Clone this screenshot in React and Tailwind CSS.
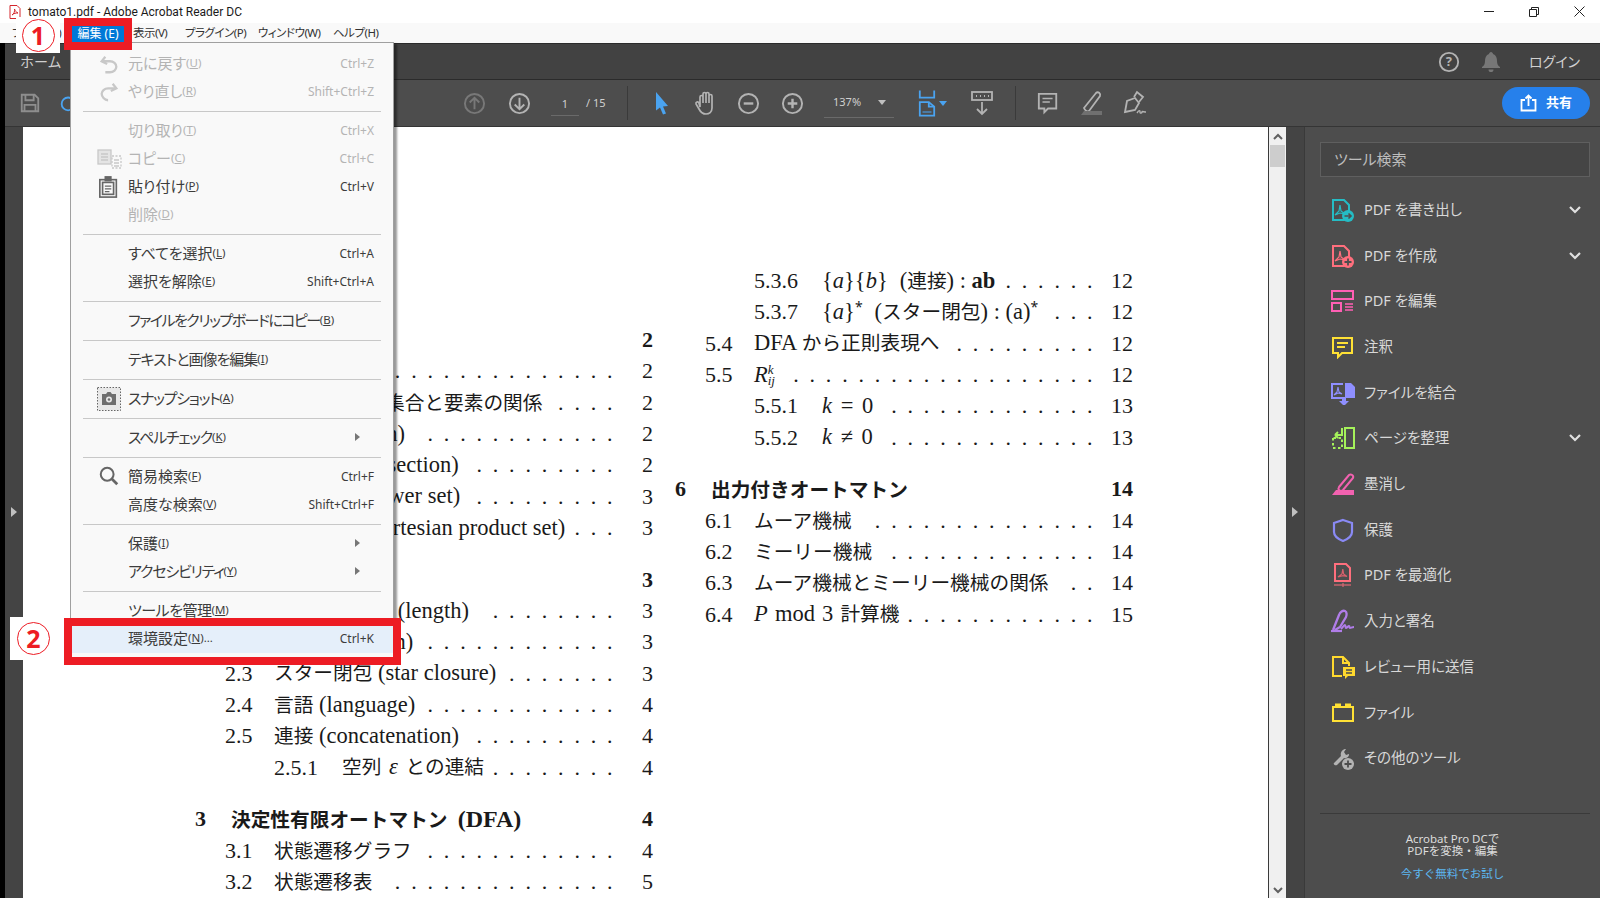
import React from 'react';

const Ico = ({ w = 24, h = 24, vb = '0 0 24 24', c = '#b3b3b3', sw = 2, children, className = '' }) => (
  <svg width={w} height={h} viewBox={vb} fill="none" stroke={c} strokeWidth={sw} className={className}>
    {children}
  </svg>
);

const toolIcons = {
  exportPdf: (
    <Ico c="#25bcc4">
      <path d="M13 22H2V2h11l5 5v7" />
      <path d="M4 17l4-4 1-6 1 6 4 3-5-1z" strokeWidth="1.200" />
      <circle cx="17" cy="18" r="6" fill="#25bcc4" stroke="none" />
      <path d="M13.500 18h6M17.500 15.500l2.500 2.500-2.500 2.500" stroke="#4d4d4d" strokeWidth="1.600" />
    </Ico>
  ),
  createPdf: (
    <Ico c="#ff6f7d">
      <path d="M13 22H2V2h11l5 5v7" />
      <path d="M4 17l4-4 1-6 1 6 4 3-5-1z" strokeWidth="1.200" />
      <circle cx="17" cy="18" r="6" fill="#ff6f7d" stroke="none" />
      <path d="M13.500 18h7M17 14.500v7" stroke="#4d4d4d" strokeWidth="1.800" />
    </Ico>
  ),
  editPdf: (
    <Ico c="#ff5fb4">
      <rect x="1" y="2" width="21" height="8" />
      <rect x="1" y="14" width="9" height="8" />
      <path d="M14 15h8M14 18h8M14 21h8" strokeWidth="1.300" />
    </Ico>
  ),
  comment: (
    <Ico c="#ffe135">
      <path d="M2 3h19v15H11l-4 4v-4H2z" />
      <path d="M6 8h11M6 12h8" />
    </Ico>
  ),
  combine: (
    <Ico c="#8f8fff">
      <path d="M11 17H1V3h11" />
      <path d="M3 14l3-3 1-5 1 5 3 2-4-1z" strokeWidth="1.100" />
      <path d="M14 2h6l4 4v11H14z" fill="#8f8fff" stroke="none" />
      <path d="M11 16h4v4h3l-5 5-5-5h3z" fill="#8f8fff" stroke="none" />
    </Ico>
  ),
  organize: (
    <Ico c="#a5f25a">
      <rect x="14" y="2" width="9" height="20" />
      <path d="M2 12v10h9v-10z" strokeDasharray="2.500 2.500" />
      <path d="M11 2v7H4M4 9l3-3M4 9l3 3" strokeWidth="2" />
    </Ico>
  ),
  redact: (
    <Ico c="#f262b0">
      <path d="M8 15L18 3c2-1.500 5 .5 4 3L12 18c-1 1-3 1-4 0-.7-1-.7-2 0-3z" />
      <path d="M1 23l4-5h18v5z" fill="#f262b0" stroke="none" />
    </Ico>
  ),
  protect: (
    <Ico c="#8a8af5" sw={2.200}>
      <path d="M12 2l9 3v9c0 4-4 7-9 9-5-2-9-5-9-9V5z" />
    </Ico>
  ),
  optimize: (
    <Ico c="#ff6f7d">
      <path d="M15 18H4V1h11l4 4v13z" />
      <path d="M7 14l4-3 .8-5 .8 5 3.400 2.500-4-.8z" strokeWidth="1.200" stroke="#d9606c" />
      <path d="M3 22h7M14 22h6" strokeWidth="1.200" />
      <circle cx="12" cy="22" r="1.200" strokeWidth="1" />
    </Ico>
  ),
  sign: (
    <Ico c="#b07de8" sw={2.300}>
      <path d="M2 21L8 6c1-3 4-5 6-4s2 3 1 6l-6 10-5 3" />
      <path d="M10 20c2-2 3-4 4-4s0 3 1 3 2-2 3-2 0 2 1 2 2-1 4-1" strokeWidth="2" />
      <path d="M0 22h11" strokeWidth="2.200" />
    </Ico>
  ),
  review: (
    <Ico c="#ffd92e">
      <path d="M11 21H2V2h10l6 6v3" />
      <path d="M12 2v6h6" />
      <path d="M12 12h12v9h-7l-3 3v-3h-2z" fill="#ffd92e" stroke="none" />
      <path d="M15 15h6M15 18h6" stroke="#4d4d4d" strokeWidth="1.300" />
    </Ico>
  ),
  file: (
    <Ico c="#ffe135">
      <rect x="2" y="7" width="20" height="14" />
      <rect x="4" y="3.500" width="6" height="3.500" fill="#ffe135" stroke="none" />
      <rect x="14" y="3.500" width="6" height="3.500" fill="#ffe135" stroke="none" />
    </Ico>
  ),
  more: (
    <Ico c="#b3b3b3">
      <path d="M3 17l7-7c-1-3 1-7 5-7l-2 3 2 3 3-1c.5 2-2 5-5 4l-7 7c-2 1-4-1-3-2z" fill="#b3b3b3" stroke="none" />
      <circle cx="17" cy="18" r="6" fill="#b3b3b3" stroke="none" />
      <path d="M13.500 18h7M17 14.500v7" stroke="#4d4d4d" strokeWidth="1.800" />
    </Ico>
  ),
};

const tools = [
  { k: 'exportPdf', label: 'PDF を書き出し', more: true },
  { k: 'createPdf', label: 'PDF を作成', more: true },
  { k: 'editPdf', label: 'PDF を編集' },
  { k: 'comment', label: '注釈' },
  { k: 'combine', label: 'ファイルを結合' },
  { k: 'organize', label: 'ページを整理', more: true },
  { k: 'redact', label: '墨消し' },
  { k: 'protect', label: '保護' },
  { k: 'optimize', label: 'PDF を最適化' },
  { k: 'sign', label: '入力と署名' },
  { k: 'review', label: 'レビュー用に送信' },
  { k: 'file', label: 'ファイル' },
  { k: 'more', label: 'その他のツール' },
];

// text of the TeX page: CJK and latin have different sizes
const T = ({ s }) =>
  s.split(/([\x00-\x7f]+)/).map((part, i) =>
    /[\x00-\x7f]/.test(part) ? (
      <span key={i} className="text-[22.500px] font-['Liberation_Serif',serif]">{part}</span>
    ) : (
      <span key={i}>{part}</span>
    )
  );

const Dots = ({ n }) => (
  <div className="flex flex-1 justify-end">
    {Array.from({ length: n }).map((_, i) => (
      <span key={i} className="w-[16.33px] text-center text-[22px] font-['Liberation_Serif',serif]">.</span>
    ))}
  </div>
);

const levelWrap = ['', 'pl-[30px]', 'pl-[79px]'];
const levelNum = ['w-[36px]', 'w-[49px]', 'w-[68px]'];

const Row = ({ level = 1, num, title, s, dots = 0, page, first, titleClass = '' }) => (
  <div className={`flex h-[31.3px] items-center whitespace-nowrap ${level === 0 ? 'font-bold' : ''} ${level === 0 && !first ? 'mt-[20.500px]' : ''} ${levelWrap[level]}`}>
    <span className={`shrink-0 text-[22px] font-['Liberation_Serif',serif] ${levelNum[level]}`}>{num}</span>
    <span className={`shrink-0 ${titleClass}`}>{title || <T s={s} />}</span>
    {dots > 0 ? <Dots n={dots} /> : <div className="flex-1" />}
    <span className="w-[35px] shrink-0 text-right text-[22px] font-['Liberation_Serif',serif]">{page}</span>
  </div>
);

const I = ({ children }) => <i className="text-[22.500px] font-['Liberation_Serif',serif]">{children}</i>;
const L = ({ children, className = '' }) => <span className={`text-[22.500px] font-['Liberation_Serif',serif] ${className}`}>{children}</span>;

const Col = ({ className, children }) => (
  <div className={`w-[458px] shrink-0 text-[19.700px] leading-none text-[#1a1a1a] ${className}`}>{children}</div>
);

const MenuItem = ({ label, m, tail, sc, off, icon, arrow, active, tight = '' }) => (
  <div className={`relative flex h-[28px] items-center pb-[2px] pl-[57px] pr-[19px] ${active ? 'bg-[#e5effa]' : ''} ${off ? 'text-[#b4b4b4]' : 'text-[#3c3c3c]'}`}>
    {icon && <span className="absolute left-[24px] top-0 flex h-[28px] w-[28px] items-center justify-center">{icon}</span>}
    <span className={`text-[15px] [font-feature-settings:'palt'] ${tight}`}>{label}</span>
    <span className="text-[11.500px]">(<span className="underline">{m}</span>){tail}</span>
    {sc && <span className="ml-auto mt-[2px] text-[12px]">{sc}</span>}
    {arrow && <span className="ml-auto mr-[14px] h-0 w-0 border-y-[4px] border-l-[5px] border-y-transparent border-l-[#777]" />}
  </div>
);

const Sep = () => (
  <div className="flex h-[11px] items-center px-[12px]">
    <div className="h-px w-full bg-[#c8c8c8]" />
  </div>
);

const EditMenu = () => (
  <div className="absolute left-[70px] top-[42px] w-[324px] border border-[#a0a0a0] bg-[#f9f9f9] py-[7px] shadow-[3px_2px_2px_rgba(0,0,0,0.4)]">
    <MenuItem off label="元に戻す" m="U" sc="Ctrl+Z" icon={<Ico w={22} h={22} c="#c8c8c8" sw={2.500}><path d="M8 4L4 9l6 3" /><path d="M5 9h8c4 0 7 3 7 6s-3 6-7 6H8" /></Ico>} />
    <MenuItem off label="やり直し" m="R" sc="Shift+Ctrl+Z" icon={<Ico w={22} h={22} c="#c8c8c8" sw={2.500}><path d="M16 3l4 5-6 3" /><path d="M19 8h-8c-4 0-7 3-7 6s3 7 7 7" /></Ico>} />
    <Sep />
    <MenuItem off label="切り取り" m="T" sc="Ctrl+X" />
    <MenuItem off label="コピー" m="C" sc="Ctrl+C" icon={<Ico c="#c8c8c8" sw={1.300} w={26} h={24}><rect x="1" y="3" width="13" height="14" fill="#e4e4e4" /><path d="M4 7h7M4 10h7M4 13h7" /><rect x="15" y="9" width="9" height="12" strokeDasharray="2 1.500" /><path d="M17 13h5M17 16h5M17 19h5" /></Ico>} />
    <MenuItem label="貼り付け" m="P" sc="Ctrl+V" icon={<Ico c="#666" sw={1.800} w={22} h={24}><rect x="2" y="4" width="18" height="19" /><rect x="8" y="1" width="6" height="4" fill="#666" /><rect x="5" y="7" width="12" height="13" /><path d="M7.500 11h7M7.500 14h7M7.500 17h5" strokeWidth="1.300" /></Ico>} />
    <MenuItem off label="削除" m="D" />
    <Sep />
    <MenuItem label="すべてを選択" m="L" sc="Ctrl+A" />
    <MenuItem label="選択を解除" m="E" sc="Shift+Ctrl+A" />
    <Sep />
    <MenuItem label="ファイルをクリップボードにコピー" m="B" tight="tracking-[-1.500px]" />
    <Sep />
    <MenuItem label="テキストと画像を編集" m="I" tight="tracking-[-1px]" />
    <Sep />
    <MenuItem label="スナップショット" m="A" tight="tracking-[-1.300px]" icon={<svg width="24" height="24" viewBox="0 0 24 24"><rect x="0.500" y="0.500" width="23" height="23" fill="#e8e8e8" stroke="#666" strokeDasharray="1.500 1.500" /><path d="M5 7h4l1.500-2h3L15 7h4v11H5z" fill="#6e6e6e" /><circle cx="12" cy="12.500" r="3" fill="#e8e8e8" /><circle cx="12" cy="12.500" r="1.300" fill="#6e6e6e" /></svg>} />
    <Sep />
    <MenuItem label="スペルチェック" m="K" arrow tight="tracking-[-1.300px]" />
    <Sep />
    <MenuItem label="簡易検索" m="F" sc="Ctrl+F" icon={<Ico c="#666" sw={2.200} w={22} h={22}><circle cx="10" cy="9" r="7" /><path d="M15 14l6 6" strokeWidth="3" /></Ico>} />
    <MenuItem label="高度な検索" m="V" sc="Shift+Ctrl+F" />
    <Sep />
    <MenuItem label="保護" m="I" arrow />
    <MenuItem label="アクセシビリティ" m="Y" arrow tight="tracking-[-1.200px]" />
    <Sep />
    <MenuItem label="ツールを管理" m="M" tight="tracking-[-0.500px]" />
    <MenuItem active label="環境設定" m="N" tail="..." sc="Ctrl+K" />
  </div>
);

const Badge = ({ n, className }) => (
  <div className={`absolute flex items-center bg-white ${className}`}>
    <div className="flex h-[33px] w-[33px] items-center justify-center rounded-full border-[1.500px] border-[#ed1c24] text-[25px] font-bold leading-none text-[#ed1c24]">
      {n}
    </div>
  </div>
);

const TB = ({ w = 'w-[44px]', className = '', children }) => (
  <div className={`flex h-[34px] shrink-0 items-center justify-center ${w} ${className}`}>{children}</div>
);

const Toolbar = () => (
  <div className="flex h-[47px] shrink-0 items-center border-b border-[#353535] bg-[#4d4d4d] text-[#d0d0d0]">
    <TB w="w-[30px]" className="ml-[10px]">
      <Ico w={22} h={22} c="#8e8e8e"><path d="M3 3h14l4 4v14H3z" /><path d="M7 3v6h9V3M6 21v-7h12v7" /></Ico>
    </TB>
    <TB w="w-[30px]" className="ml-[9px]">
      <Ico w={22} h={22} c="#4aa3f0"><circle cx="11" cy="13" r="7" /></Ico>
    </TB>
    <TB className="ml-[368px]">
      <Ico c="#787878" w={23} h={23}><circle cx="12" cy="12" r="10" /><path d="M12 18V6M7 11l5-5 5 5" /></Ico>
    </TB>
    <TB className="ml-[1px]">
      <Ico w={23} h={23}><circle cx="12" cy="12" r="10" /><path d="M12 6v12M7 13l5 5 5-5" /></Ico>
    </TB>
    <div className="ml-[10px] w-[28px] border-b border-[#6a6a6a] pb-[4px] pt-[6px] text-center text-[11px] leading-[14px]">1</div>
    <div className="ml-[7px] w-[21px] whitespace-nowrap text-[11px]">/ 15</div>
    <div className="ml-[20px] h-[34px] w-px bg-[#3a3a3a]" />
    <TB className="ml-[12px]">
      <svg width="18" height="24" viewBox="0 0 18 24"><path d="M3 1l12 14-5 .5 3 7-3 1-3-7-4 3z" fill="#4aa3f0" /></svg>
    </TB>
    <TB>
      <Ico w={24} h={26} vb="0 0 24 26" sw={1.700}><path d="M6 17V7a1.500 1.500 0 013 0v6V4a1.500 1.500 0 013 0v9V4a1.500 1.500 0 013 0v9V6a1.500 1.500 0 013 0v12c0 4-3 6-6 6s-5-1-7-5l-3-5c-.5-2 2-3 3-1z" /></Ico>
    </TB>
    <TB className="ml-[-2px]">
      <Ico w={23} h={23}><circle cx="12" cy="12" r="10" /><path d="M7 12h10" strokeWidth="2.500" /></Ico>
    </TB>
    <TB>
      <Ico w={23} h={23}><circle cx="12" cy="12" r="10" /><path d="M7 12h10M12 7v10" strokeWidth="2.500" /></Ico>
    </TB>
    <div className="ml-[10px] flex h-[30px] w-[70px] items-center border-b border-[#6a6a6a] pl-[9px] pr-[8px] text-[11px]">
      137%
      <span className="ml-auto h-0 w-0 border-x-[4px] border-t-[5px] border-x-transparent border-t-[#c0c0c0]" />
    </div>
    <TB w="w-[22px]" className="ml-[22px]">
      <Ico w={18} h={30} vb="0 0 20 30" c="#4aa3f0" sw={2}><path d="M2 1v8h16V1M2 29V14h10l6 5v10z" /><path d="M12 14v5h6" /><path d="M5 25h10" strokeWidth="1.200" /></Ico>
    </TB>
    <span className="ml-[1px] h-0 w-0 border-x-[4px] border-t-[5px] border-x-transparent border-t-[#4aa3f0]" />
    <TB className="ml-[13px]">
      <Ico w={24} h={28} vb="0 0 24 28" sw={1.800}><rect x="2" y="3" width="20" height="8" /><path d="M6 7h1M10 7h1M14 7h1M18 7h1" /><path d="M12 13v12M7 20l5 5 5-5" /></Ico>
    </TB>
    <div className="ml-[11px] h-[34px] w-px bg-[#3a3a3a]" />
    <TB className="ml-[10px]">
      <Ico w={22} h={24}><path d="M2 2h19v16h-9l-4 4v-4H2z" /><path d="M6 7h11M6 11h8" strokeWidth="1.600" /></Ico>
    </TB>
    <TB className="ml-[-1px]">
      <Ico w={24} h={26} vb="0 0 24 26" sw={1.800}><path d="M5 18L17 3c2-2 5 .5 4 3L10 21c-1 1-4 0-5-3z" /><path d="M2 25l3-4h18v4z" fill="#707070" stroke="none" /></Ico>
    </TB>
    <TB>
      <Ico w={26} h={26} vb="0 0 26 26" sw={1.800}><path d="M3 22l2-11 8-3 4 5-4 7z" /><path d="M12 7l3-5 6 5-4 5" /><path d="M15 23c2-3 3-3 3-1s2 1 2 0 2 0 4 0" strokeWidth="1.400" /></Ico>
    </TB>
    <div className="ml-auto mr-[10px] flex h-[32px] w-[88px] items-center justify-center gap-[9px] rounded-full bg-[#2680eb] text-[13px] font-bold text-white">
      <Ico w={17} h={18} vb="0 0 17 18" c="#ffffff" sw={1.800}><path d="M5 6H1.500v10.500h14V6H12" /><path d="M8.500 12V2M5.500 4.500l3-3 3 3" /></Ico>
      共有
    </div>
  </div>
);

export default function App() {
  return (
    <div className="relative flex h-[898px] w-[1600px] flex-col overflow-hidden bg-white font-['Noto_Sans','Noto_Sans_CJK_JP',sans-serif] text-[#222]">
      {/* title bar */}
      <div className="flex h-[23px] shrink-0 items-center pl-[9px] text-[12px]">
        <svg width="12" height="14" viewBox="0 0 12 14" fill="none" stroke="#d4262c" strokeWidth="1"><path d="M1 .5h7l3 3v10H1z" /><path d="M3 10c2-1 3-4 2.500-6 .5 2 1.500 3 3.500 4-2 0-4 0-6 2z" /></svg>
        <span className="ml-[7px] font-['Roboto',sans-serif] text-[#1a1a1a]">tomato1.pdf - Adobe Acrobat Reader DC</span>
        <div className="ml-auto flex items-center">
          <div className="h-px w-[10px] bg-[#222]" />
          <svg className="ml-[35px]" width="10" height="10" viewBox="0 0 10 10" fill="none" stroke="#222"><path d="M.5 2.500h7v7h-7zM2.500 2.500v-2h7v7h-2" /></svg>
          <svg className="ml-[35px] mr-[15px]" width="11" height="11" viewBox="0 0 11 11" fill="none" stroke="#222"><path d="M.5.500l10 10M10.500.500l-10 10" /></svg>
        </div>
      </div>

      {/* menu bar */}
      <div className="flex h-[20px] shrink-0 items-center bg-[#f9f9f9] pl-[12px] text-[11.500px] tracking-[-0.500px] text-[#333] [font-feature-settings:'palt']">
        <span className="w-[56px] whitespace-nowrap">ファイル(F)</span>
        <span className="w-[65px]" />
        <span className="w-[52px] whitespace-nowrap">表示(V)</span>
        <span className="w-[73px] whitespace-nowrap">プラグイン(P)</span>
        <span className="w-[75px] whitespace-nowrap">ウィンドウ(W)</span>
        <span className="whitespace-nowrap">ヘルプ(H)</span>
      </div>

      <div className="flex min-h-0 flex-1">
        <div className="w-[5px] shrink-0 bg-black" />
        <div className="flex min-w-0 flex-1 flex-col">
          {/* nav */}
          <div className="flex h-[37px] shrink-0 items-center border-y border-[#2b2b2b] bg-[#424242] pl-[15px] pr-[20px] text-[#d0d0d0]">
            <span className="text-[14px] text-[#cfcfcf]">ホーム</span>
            <Ico className="ml-auto" w={22} h={22} sw={2}><circle cx="12" cy="12" r="10" /></Ico>
            <span className="ml-[-16px] mr-[6px] w-[10px] text-center text-[13px] font-bold text-[#b3b3b3]">?</span>
            <svg className="ml-[22px]" width="18" height="22" viewBox="0 0 18 22"><path d="M9 1c1 0 2 1 2 2 3 1 4 4 4 7 0 3 1 5 3 6v1H0v-1c2-1 3-3 3-6 0-3 1-6 4-7 0-1 1-2 2-2zM6.500 18.500h5c0 2-1 2.500-2.500 2.500s-2.500-.5-2.500-2.500z" fill="#777" /></svg>
            <span className="ml-[29px] text-[14px] [font-feature-settings:'palt']">ログイン</span>
          </div>

          <Toolbar />

          <div className="flex min-h-0 flex-1">
            <div className="relative w-[18px] shrink-0 bg-[#444]">
              <span className="absolute left-[6px] top-[380px] h-0 w-0 border-y-[5px] border-l-[6px] border-y-transparent border-l-[#c0c0c0]" />
            </div>

            {/* page */}
            <div className="flex w-[1245px] shrink-0 gap-[22px] overflow-hidden bg-white pl-[172px]">
              <Col className="pt-[197.500px]">
                <Row first level={0} num="1" s="集合" page="2" />
                <Row num="1.1" s="集合 (set)" dots={15} page="2" />
                <Row num="1.2" s="集合と要素の関係" titleClass="ml-[111px]" dots={4} page="2" />
                <Row num="1.3" s="和集合 (union)" dots={12} page="2" />
                <Row num="1.4" s="積集合 (intersection)" dots={9} page="2" />
                <Row num="1.5" s="べき集合 (power set)" dots={9} page="3" />
                <Row num="1.6" s="直積集合 (Cartesian product set)" titleClass="ml-[2px]" dots={3} page="3" />
                <Row level={0} num="2" s="言語" page="3" />
                <Row num="2.1" s="文字列の長さ (length)" dots={8} page="3" />
                <Row num="2.2" s="連接 (n)" titleClass="ml-[68px]" dots={12} page="3" />
                <Row num="2.3" s="スター閉包 (star closure)" dots={7} page="3" />
                <Row num="2.4" s="言語 (language)" dots={12} page="4" />
                <Row num="2.5" s="連接 (concatenation)" dots={9} page="4" />
                <Row level={2} num="2.5.1" title={<span className="[word-spacing:2.500px]">空列 <I>ε</I> との連結</span>} dots={8} page="4" />
                <Row level={0} num="3" title={<>決定性有限オートマトン <span className="ml-[5px] text-[24px] font-['Liberation_Serif',serif]">(DFA)</span></>} page="4" />
                <Row num="3.1" s="状態遷移グラフ" dots={12} page="4" />
                <Row num="3.2" s="状態遷移表" dots={14} page="5" />
              </Col>
              <Col className="pt-[138.500px]">
                <Row level={2} num="5.3.6" title={<><L>{'{'}</L><I>a</I><L>{'}{'}</L><I>b</I><L>{'}'}</L><span className="ml-[12px]"><L>(</L>連接<L>) : </L><L className="font-bold">ab</L></span></>} dots={6} page="12" />
                <Row level={2} num="5.3.7" title={<><L>{'{'}</L><I>a</I><L>{'}'}</L><sup className="text-[14px]">*</sup><span className="ml-[12px]"><L>(</L>スター閉包<L>) : (a)</L></span><sup className="text-[14px]">*</sup></>} dots={3} page="12" />
                <Row num="5.4" s="DFA から正則表現へ" dots={9} page="12" />
                <Row num="5.5" title={<span className="inline-flex items-center"><I>R</I><span className="flex flex-col text-[13px] italic leading-[11px] font-['Liberation_Serif',serif]"><span>k</span><span>ij</span></span></span>} dots={19} page="12" />
                <Row level={2} num="5.5.1" title={<span className="[word-spacing:3px]"><I>k</I><L> = 0</L></span>} dots={13} page="13" />
                <Row level={2} num="5.5.2" title={<span className="[word-spacing:3px]"><I>k</I><L> ≠ 0</L></span>} dots={13} page="13" />
                <Row level={0} num="6" s="出力付きオートマトン" page="14" />
                <Row num="6.1" s="ムーア機械" dots={14} page="14" />
                <Row num="6.2" s="ミーリー機械" dots={13} page="14" />
                <Row num="6.3" s="ムーア機械とミーリー機械の関係" dots={2} page="14" />
                <Row num="6.4" title={<span className="[word-spacing:1.500px]"><I>P</I><L> mod 3 </L>計算機</span>} dots={12} page="15" />
              </Col>
            </div>

            {/* scrollbar */}
            <div className="flex w-[18px] shrink-0 flex-col items-center border-l border-[#3a3a3a] bg-[#f0f0f0]">
              <Ico className="mt-[6px]" w={10} h={7} vb="0 0 10 7" c="#606060" sw={2}><path d="M1 6l4-4 4 4" /></Ico>
              <div className="mt-[5px] h-[22px] w-[15px] bg-[#cdcdcd]" />
              <Ico className="mb-[4px] mt-auto" w={10} h={7} vb="0 0 10 7" c="#606060" sw={2}><path d="M1 1l4 4 4-4" /></Ico>
            </div>

            <div className="relative w-[19px] shrink-0 border-r border-[#3a3a3a] bg-[#444]">
              <span className="absolute left-[6px] top-[380px] h-0 w-0 border-y-[5px] border-l-[6px] border-y-transparent border-l-[#c0c0c0]" />
            </div>

            {/* tools panel */}
            <div className="flex min-w-0 flex-1 flex-col bg-[#4d4d4d] px-[10px] pt-[15px]">
              <div className="ml-[5px] flex h-[35px] items-center border border-[#5f5f5f] bg-[#454545] pl-[13px] text-[15px] text-[#bdbdbd] [font-feature-settings:'palt']">
                ツール検索
              </div>
              <div className="mt-[10px]">
                {tools.map(t => (
                  <div key={t.k} className="flex h-[45.700px] items-center pl-[16px] text-[#d8d8d8]">
                    <span className="flex w-[33px] shrink-0 items-center">{toolIcons[t.k]}</span>
                    <span className="text-[14.500px] [font-feature-settings:'palt']">{t.label}</span>
                    {t.more && (
                      <Ico className="ml-auto mr-[9px]" w={12} h={8} vb="0 0 12 8" c="#e0e0e0" sw={2.200}><path d="M1 1l5 5 5-5" /></Ico>
                    )}
                  </div>
                ))}
              </div>
              <div className="ml-[5px] mt-[32px] h-px bg-[#3a3a3a]" />
              <div className="mt-[19px] text-center text-[11.500px] leading-[12px] text-[#dcdcdc]">
                <div>Acrobat Pro DCで</div>
                <div>PDFを変換・編集</div>
                <div className="mt-[11px] text-[#5cb7f0]">今すぐ無料でお試し</div>
              </div>
            </div>
          </div>
        </div>
      </div>

      {/* menu opened from 編集 with the red callouts over it */}
      <EditMenu />
      <div className="absolute left-[64px] top-[18px] flex h-[32px] w-[68px] items-center justify-center border-[8px] border-[#ed1c24] bg-[#0078d7] text-[12px] text-white">
        編集 (E)
      </div>
      <div className="absolute left-[64px] top-[618px] h-[47px] w-[337px] border-[8px] border-[#ed1c24]" />
      <Badge n="1" className="left-[16px] top-[17px] h-[36px] w-[44px] justify-center" />
      <Badge n="2" className="left-[10px] top-[617px] h-[43px] w-[54px] pl-[7px]" />
    </div>
  );
}
